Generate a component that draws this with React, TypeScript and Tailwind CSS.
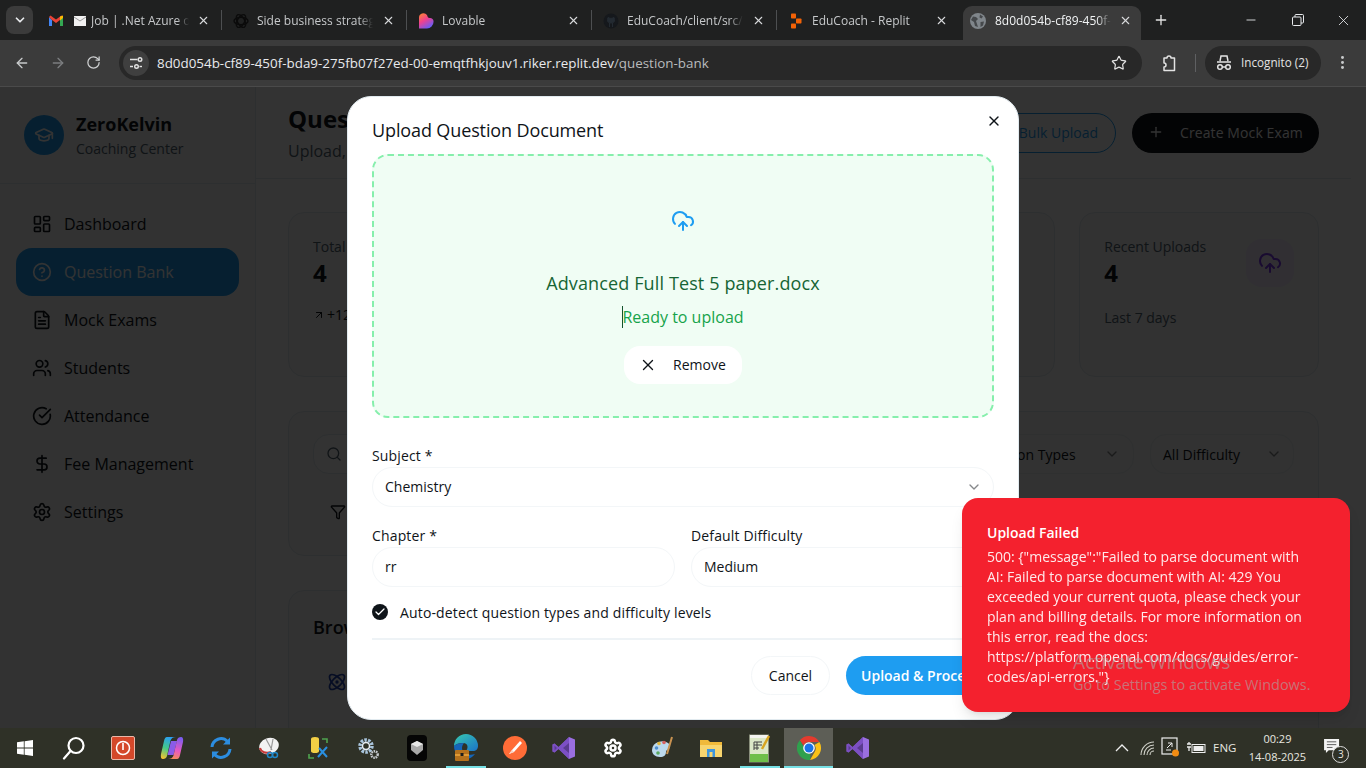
import React from "react";
import {
  LayoutDashboard, CircleHelp, FileText, Users, CircleCheckBig, DollarSign, Settings, GraduationCap,
  CloudUpload, X, ChevronDown, Check, Search, Funnel, Atom, Plus, ArrowUpRight, ArrowLeft, ArrowRight,
  RotateCw, Star, EllipsisVertical, Minus, Upload,
} from "lucide-react";

const UI = "font-['Open_Sans',sans-serif]";
const FADE = "[mask-image:linear-gradient(to_right,black_88%,transparent)]";

function Gmail() {
  return (
    <svg width="16" height="16" viewBox="0 0 16 16" className="shrink-0">
      <path d="M1 4v9h3V7z" fill="#4285f4" />
      <path d="M15 4v9h-3V7z" fill="#34a853" />
      <path d="M1 4l3 3 4 3 4-3 3-3-1.5-1.500L8 6.500 2.500 2.500z" fill="#ea4335" />
      <path d="M12 3.500l3-1v2.500l-3 2.500z" fill="#fbbc04" />
    </svg>
  );
}
function Envelope() {
  return (
    <svg width="12" height="10" viewBox="0 0 12 10" className="shrink-0">
      <rect width="12" height="10" fill="#f1f1f1" />
      <path d="M0 1l6 4 6-4" stroke="#9a9a9a" fill="none" />
    </svg>
  );
}
function Knot() {
  return (
    <svg width="16" height="16" viewBox="0 0 16 16" className="shrink-0" fill="none" stroke="#0b0b0b" strokeWidth="1.400">
      <ellipse cx="8" cy="8" rx="7" ry="3.600" />
      <ellipse cx="8" cy="8" rx="7" ry="3.600" transform="rotate(60 8 8)" />
      <ellipse cx="8" cy="8" rx="7" ry="3.600" transform="rotate(120 8 8)" />
    </svg>
  );
}
function Lovable() {
  return (
    <svg width="16" height="16" viewBox="0 0 16 16" className="shrink-0">
      <defs>
        <linearGradient id="lov" x1="0" y1="0" x2="0.6" y2="1">
          <stop offset="0" stopColor="#ff8a2a" />
          <stop offset="0.5" stopColor="#f0408f" />
          <stop offset="1" stopColor="#6a5cf6" />
        </linearGradient>
      </defs>
      <path d="M1 5a4.500 4.500 0 0 1 8-3c.6 2 1 3 2.500 3A3.500 3.500 0 0 1 15.500 9 6.500 6.500 0 0 1 9 15.500H1z" fill="url(#lov)" />
    </svg>
  );
}
function Github() {
  return (
    <svg width="16" height="16" viewBox="0 0 16 16" className="shrink-0">
      <circle cx="8" cy="8" r="7.500" fill="#15181c" />
      <path d="M4.500 6.500l.5-2 2 .8h2l2-.8.500 2c.5 2-1 3.500-3.500 3.500s-4-1.500-3.500-3.500zM6.500 10v4M9.500 10v4" fill="#232a31" stroke="#232a31" />
    </svg>
  );
}
function Replit() {
  return (
    <svg width="12" height="16" viewBox="0 0 12 16" className="shrink-0 mx-[2px]" fill="#f26207">
      <rect x="1" y="0.500" width="5" height="5" rx="0.800" />
      <rect x="6" y="5.500" width="5.500" height="5" rx="0.800" />
      <rect x="1" y="10.500" width="5" height="5" rx="0.800" />
    </svg>
  );
}
function Globe() {
  return (
    <svg width="16" height="16" viewBox="0 0 16 16" className="shrink-0">
      <circle cx="8" cy="8" r="8" fill="#80868b" />
      <path d="M3 3.500l3 .5 2 2-2 2 1 3 1 3-3-1-1-4-3-2zM10 1.500l3 2-1.500 2-2-1zM10.500 9l3.500-.5-1 4-2.500 1.500z" fill="#45484b" />
    </svg>
  );
}

function Tab({ icon, title, active, sep = true, w = "w-[185px]", pl = "pl-[11px]", closeR = "right-[12px]", tw = "w-[116px]", gap = "ml-[8px]" }: { icon: React.ReactNode; title: string; active?: boolean; sep?: boolean; w?: string; pl?: string; closeR?: string; tw?: string; gap?: string }) {
  return (
    <div className={`${w} h-[34px] relative flex items-center pb-[5px] ${pl} shrink-0 ${active ? "bg-[#3b3b3b] rounded-t-[9px]" : ""}`}>
      <div className="flex items-center shrink-0">{icon}</div>
      <span className={`${gap} ${tw} ${FADE} overflow-hidden whitespace-nowrap text-[12px] leading-[16px] ${active ? "text-[#f1f3f4]" : "text-[#c6c8ca]"}`}>
        {title}
      </span>
      <X size={13} strokeWidth={2} className={`absolute ${closeR} top-[8px] text-[#d8dadc]`} />
      {sep && <span className="absolute right-0 top-[4px] w-px h-[20px] bg-[#4d4f51]" />}
    </div>
  );
}

function ChromeBar() {
  return (
    <div className={`shrink-0 ${UI}`}>
      <div className="h-[40px] bg-[#1f2020] flex pt-[6px] relative">
        <div className="ml-[6px] w-[27px] h-[28px] rounded-[8px] bg-[#3b3b3b] flex items-center justify-center shrink-0">
          <ChevronDown size={14} strokeWidth={3} className="text-[#e8eaed]" />
        </div>
        <div className="w-[4px]" />
        <div className="w-[185px] h-[34px] relative flex items-center pb-[5px] pl-[11px] shrink-0">
          <div className="flex items-center gap-[10px]"><Gmail /><Envelope /></div>
          <span className={`ml-[5px] w-[98px] ${FADE} overflow-hidden whitespace-nowrap text-[12px] leading-[16px] text-[#c6c8ca]`}>Job | .Net Azure o</span>
          <X size={13} strokeWidth={2} className="absolute right-[12px] top-[8px] text-[#d8dadc]" />
          <span className="absolute right-0 top-[4px] w-px h-[20px] bg-[#4d4f51]" />
        </div>
        <Tab icon={<Knot />} title="Side business strategy" />
        <Tab icon={<Lovable />} title="Lovable" />
        <Tab icon={<Github />} title="EduCoach/client/src/c" />
        <Tab icon={<Replit />} title="EduCoach - Replit" w="w-[183px]" sep={false} />
        <div className="w-[3px]" />
        <Tab icon={<Globe />} title="8d0d054b-cf89-450f-" active sep={false} w="w-[178px]" pl="pl-[7px]" closeR="right-[9px]" gap="ml-[9px]" />
        <Plus size={16} strokeWidth={2} className="ml-[12px] mt-[6px] text-[#e3e3e3] shrink-0" />
        <div className="flex-1" />
        <Minus size={14} strokeWidth={1.500} className="mt-[7px] text-[#e8eaed]" />
        <svg width="12" height="12" viewBox="0 0 12 12" className="ml-[34px] mt-[8px]" fill="none" stroke="#e8eaed">
          <rect x="0.500" y="3" width="8.500" height="8.500" rx="1" />
          <path d="M3 3V1.500a1 1 0 0 1 1-1h6.500a1 1 0 0 1 1 1V8a1 1 0 0 1-1 1H9" />
        </svg>
        <X size={17} strokeWidth={1.200} className="ml-[31px] mr-[14px] mt-[6px] text-[#e8eaed]" />
      </div>
      <div className="h-[47px] bg-[#3b3b3b] border-b border-[#4a4a4a] flex items-start pt-[6px]">
        <ArrowLeft size={16} strokeWidth={2} className="ml-[14px] mt-[9px] text-[#c8cacb]" />
        <ArrowRight size={16} strokeWidth={2} className="ml-[20px] mt-[9px] text-[#7c7e80]" />
        <RotateCw size={15} strokeWidth={2} className="ml-[20px] mt-[9px] text-[#d0d2d3]" />
        <div className="ml-[18px] w-[1023px] h-[34px] rounded-full bg-[#282828] flex items-center pl-[4px] pr-[15px]">
          <div className="w-[26px] h-[26px] rounded-full bg-[#3f3f3f] flex items-center justify-center shrink-0">
            <svg width="14" height="14" viewBox="0 0 14 14" fill="none" stroke="#e3e3e3" strokeWidth="1.400">
              <path d="M1 3.500h7.500M1 10.500h3" />
              <circle cx="11" cy="3.500" r="1.800" />
              <circle cx="7.500" cy="10.500" r="1.800" />
              <path d="M10.500 10.500H13" />
            </svg>
          </div>
          <span className="ml-[8px] text-[13.400px] leading-[18px] text-[#e8eaed] whitespace-nowrap">
            8d0d054b-cf89-450f-bda9-275fb07f27ed-00-emqtfhkjouv1.riker.replit.dev<span className="text-[#b9bbbd]">/question-bank</span>
          </span>
          <div className="flex-1" />
          <Star size={16} strokeWidth={1.800} className="text-[#e3e3e3]" />
        </div>
        <svg width="16" height="18" viewBox="0 0 16 18" fill="none" stroke="#e3e3e3" strokeWidth="1.500" className="ml-[19px] mt-[8px]">
          <path d="M3 4h3a2 2 0 0 1 4 0h3.500v12.500H3V13a2 2 0 0 0 0-4z" strokeLinejoin="round" />
        </svg>
        <span className="ml-[18px] mt-[8px] w-px h-[18px] bg-[#5f6062]" />
        <div className="ml-[9px] w-[116px] h-[34px] rounded-full bg-[#282828] flex items-center pl-[10px]">
          <svg width="18" height="16" viewBox="0 0 18 16" fill="none" stroke="#e3e3e3" strokeWidth="1.500">
            <path d="M5 6l1-5h6l1 5M2 7h14" />
            <circle cx="5" cy="12" r="2.300" />
            <circle cx="13" cy="12" r="2.300" />
            <path d="M7.300 12h3.400" />
          </svg>
          <span className="ml-[8px] text-[11.700px] text-[#e3e3e3] whitespace-nowrap">Incognito (2)</span>
        </div>
        <EllipsisVertical size={17} strokeWidth={2.200} className="ml-[13px] mt-[8px] text-[#c8cacb]" />
      </div>
    </div>
  );
}

const nav = [
  { label: "Dashboard", icon: LayoutDashboard },
  { label: "Question Bank", icon: CircleHelp, active: true },
  { label: "Mock Exams", icon: FileText },
  { label: "Students", icon: Users },
  { label: "Attendance", icon: CircleCheckBig },
  { label: "Fee Management", icon: DollarSign },
  { label: "Settings", icon: Settings },
];

function Sidebar() {
  return (
    <aside className="w-[256px] shrink-0 bg-[#f7f8f8] border-r border-[#e1eaef] flex flex-col">
      <div className="h-[97px] shrink-0 border-b border-[#e1eaef] flex items-center px-6 gap-3">
        <div className="w-10 h-10 rounded-full bg-[#1e9df1] flex items-center justify-center">
          <GraduationCap size={20} className="text-white" />
        </div>
        <div>
          <div className="text-[18px] leading-[26px] font-bold text-[#0f1419]">ZeroKelvin</div>
          <div className="mt-[2px] text-[14px] leading-[20px] text-[#536471]">Coaching Center</div>
        </div>
      </div>
      <nav className="p-4">
        {nav.map((n) => (
          <div key={n.label} className={`h-12 rounded-2xl px-4 flex items-center gap-3 text-[16px] ${n.active ? "bg-[#1e9df1] text-white" : "text-[#0f1419]"}`}>
            <n.icon size={20} strokeWidth={2} />
            <span>{n.label}</span>
          </div>
        ))}
      </nav>
    </aside>
  );
}

function Stat({ title, value, sub, subClass, icon }: { title: string; value: string; sub: React.ReactNode; subClass?: string; icon?: React.ReactNode }) {
  return (
    <div className="h-[165px] rounded-2xl border border-[#e1eaef] bg-[#f7f8f8] p-6 flex justify-between">
      <div>
        <div className="text-[14px] leading-[20px] text-[#536471]">{title}</div>
        <div className="text-[24px] leading-[32px] font-bold text-[#0f1419]">{value}</div>
        <div className={`mt-[19px] text-[14px] leading-[20px] ${subClass ?? "text-[#536471]"}`}>{sub}</div>
      </div>
      {icon && <div className="mt-[2px] w-12 h-12 rounded-2xl bg-[#f3e8ff] flex items-center justify-center shrink-0">{icon}</div>}
    </div>
  );
}

function Page() {
  return (
    <main className="flex-1 min-w-0 pr-[15px] bg-white">
      <header className="h-[92px] border-b border-[#e1eaef] px-8 py-4 flex justify-between">
        <div>
          <h1 className="text-[24px] leading-[32px] font-bold text-[#0f1419]">Question Bank</h1>
          <p className="mt-1 text-[16px] leading-[24px] text-[#536471]">Upload, manage and organize your questions</p>
        </div>
        <div className="flex gap-4 mt-[10px]">
          <div className="h-10 px-[17px] pb-[2px] rounded-[20px] border border-[#1e9df1] text-[#1e9df1] text-[14px] font-medium flex items-center gap-3">
            <Upload size={16} />
            Bulk Upload
          </div>
          <div className="h-10 w-[187px] pl-[16px] pb-[2px] rounded-[20px] bg-[#0f1419] text-white text-[14px] font-medium tracking-[0.1px] flex items-center gap-[16px] whitespace-nowrap">
            <Plus size={16} />
            Create Mock Exam
          </div>
        </div>
      </header>
      <div className="px-8 pt-[33px] flex flex-col gap-[34px]">
        <div className="grid grid-cols-4 gap-6">
          <Stat
            title="Total Questions"
            value="4"
            subClass="text-[#0f1419] text-[12px]"
            sub={<span className="flex items-center gap-[2px] -mt-[3px]"><ArrowUpRight size={12} />+12 this week</span>}
          />
          <Stat title="Verified" value="4" sub="All verified" />
          <Stat title="Subjects" value="4" sub="Active subjects" />
          <Stat title="Recent Uploads" value="4" sub="Last 7 days" icon={<CloudUpload size={24} className="text-[#7c3aed]" />} />
        </div>
        <div className="h-[145px] rounded-2xl border border-[#e1eaef] bg-[#f7f8f8] p-6 flex flex-col">
          <div className="flex gap-4 items-center h-10 -mt-[2px]">
            <div className="flex-1 h-10 rounded-2xl border border-[#e1eaef] bg-white flex items-center pl-3 gap-2 text-[#536471]">
              <Search size={16} />
              <span className="text-[14px]">Search questions...</span>
            </div>
            <div className="w-[193px] h-10 flex items-center justify-between px-[13px] text-[14px] text-[#0f1419] rounded-2xl border border-[#e8edf0]">
              <span>All Question Types</span>
              <ChevronDown size={16} className="opacity-50" />
            </div>
            <div className="w-[144px] h-10 flex items-center justify-between pl-[12px] pr-[11px] text-[14px] text-[#0f1419] rounded-2xl border border-[#e8edf0]">
              <span>All Difficulty</span>
              <ChevronDown size={16} className="opacity-50" />
            </div>
          </div>
          <div className="mt-[18px] h-10 pl-[17px] flex items-center gap-2 text-[14px] text-[#0f1419]">
            <Funnel size={16} />
            <span>Filters</span>
          </div>
        </div>
        <div className="rounded-2xl border border-[#e1eaef] bg-[#f7f8f8] px-6 pt-[23px] h-[300px]">
          <h2 className="text-[18px] leading-[26px] font-semibold text-[#0f1419]">Browse by Subject</h2>
          <div className="mt-[32px] pl-[14px] flex items-center">
            <Atom size={20} className="text-[#1e40af]" />
          </div>
        </div>
      </div>
    </main>
  );
}

function Field({ label, value, chevron }: { label: string; value: string; chevron?: boolean }) {
  return (
    <div className="min-w-0">
      <div className="text-[14px] leading-[20px] font-medium tracking-[0.15px] text-[#0f1419]">{label}</div>
      <div className="mt-[1px] h-10 rounded-[20px] border border-[#f3f6f8] bg-white flex items-center justify-between pl-[12px] pr-[11px] text-[14px] text-[#0f1419]">
        <span>{value}</span>
        {chevron && <ChevronDown size={16} className="text-[#0f1419] opacity-50" />}
      </div>
    </div>
  );
}

function Modal() {
  return (
    <div className="relative w-[672px] h-[624px] shrink-0 rounded-[24px] border border-[#e1eaef] bg-white p-6 text-[#0f1419]">
      <X size={16} strokeWidth={2} className="absolute right-[16px] top-[16px]" />
      <h2 className="-mt-[1px] text-[18px] leading-[20px] font-medium tracking-[-0.12px]">Upload Question Document</h2>
      <div className="mt-[14px] h-[264px] rounded-2xl border-2 border-dashed border-[#86efac] bg-[#f0fdf4] flex flex-col items-center pt-[53px]">
        <CloudUpload size={24} strokeWidth={2} className="text-[#1e9df1]" />
        <p className="mt-[36px] text-[18px] leading-[28px] font-medium tracking-[0.13px] text-[#166534]">Advanced Full Test 5 paper.docx</p>
        <p className="mt-2 relative text-[16px] leading-[24px] text-[#16a34a]">
          <span className="absolute left-0 top-[1px] w-px h-[22px] bg-[#14532d]" />
          Ready to upload
        </p>
        <div className="mt-[17px] h-[38px] w-[118px] rounded-2xl bg-white flex items-center pl-[15px] gap-[16px] text-[14px] font-medium">
          <X size={18} strokeWidth={1.800} />
          <span>Remove</span>
        </div>
      </div>
      <div className="mt-[28px]">
        <Field label="Subject *" value="Chemistry" chevron />
      </div>
      <div className="mt-[19px] grid grid-cols-2 gap-4">
        <Field label="Chapter *" value="rr" />
        <Field label="Default Difficulty" value="Medium" chevron />
      </div>
      <div className="mt-[16px] h-5 flex items-center gap-3">
        <span className="-mt-[2px] w-4 h-4 rounded-full bg-[#0f1419] flex items-center justify-center">
          <Check size={12} strokeWidth={2.500} className="text-white" />
        </span>
        <span className="text-[14px] font-medium tracking-[0.15px]">Auto-detect question types and difficulty levels</span>
      </div>
      <div className="mt-[15px] h-[2px] bg-[#eef3f6]" />
      <div className="mt-[16px] flex justify-end gap-4">
        <div className="h-[39px] w-[79px] rounded-[20px] border border-[#f3f6f8] bg-white flex items-center justify-center text-[14px] font-medium">Cancel</div>
        <div className="h-[39px] w-[148px] rounded-[20px] bg-[#1e9df1] text-white flex items-center justify-center text-[14px] font-semibold whitespace-nowrap">Upload &amp; Process</div>
      </div>
    </div>
  );
}

function Toast() {
  return (
    <div className="absolute right-4 bottom-4 w-[388px] h-[214px] rounded-2xl bg-[#f4212e] pl-[25px] pr-[40px] pt-[25px] text-white shadow-lg">
      <div className="text-[14px] leading-[20px] font-semibold">Upload Failed</div>
      <div className="mt-[4px] text-[14px] leading-[20px] opacity-90 break-words">
        500: {"{"}"message":"Failed to parse document with AI: Failed to parse document with AI: 429 You exceeded your current quota, please check your plan and billing details. For more information on this error, read the docs: https://platform.openai.com/docs/guides/error-codes/api-errors."{"}"}
      </div>
    </div>
  );
}

function Tb({ children, hl, line }: { children: React.ReactNode; hl?: boolean; line?: "short" | "full" }) {
  return (
    <div className={`relative w-[49px] h-full flex items-center justify-center shrink-0 ${hl ? "bg-[#5d5e56]" : ""}`}>
      {children}
      {line === "short" && <span className="absolute bottom-0 left-[5px] w-[40px] h-[2px] bg-[#76e0e5]" />}
      {line === "full" && <span className="absolute bottom-0 left-0 w-full h-[2px] bg-[#76e0e5]" />}
    </div>
  );
}

function VS() {
  return (
    <svg width="24" height="24" viewBox="0 0 24 24">
      <path d="M17 1l6 2.500v17L17 23 6.500 13 2.500 16.500 0.500 15.500V8.500L2.500 7.500l4 3.500z" fill="#9a6ee0" />
      <path d="M17 7l-6 5 6 5zM2.500 9.500v5L5 12z" fill="#3a3448" />
      <path d="M17 1L6.500 11 2.500 7.500 0.500 8.500V15.500l2 1 4-3.500L17 23z" fill="#6b3fb5" opacity="0.650" />
    </svg>
  );
}

function Taskbar() {
  return (
    <div className={`h-[40px] shrink-0 bg-[#2f3127] flex items-stretch text-white ${UI}`}>
      <Tb>
        <svg width="16" height="16" viewBox="0 0 16 16" fill="#fff">
          <path d="M0 2.300l6.800-1v6.300H0zM7.600 1.200L16 0v7.600H7.600zM0 8.400h6.800v6.300L0 13.700zM7.600 8.400H16V16l-8.400-1.200z" />
        </svg>
      </Tb>
      <Tb>
        <svg width="24" height="24" viewBox="0 0 24 24" fill="none" stroke="#fff" strokeWidth="2.200">
          <circle cx="14" cy="9.500" r="7.500" />
          <path d="M8.500 15L2 22.500" strokeLinecap="round" />
        </svg>
      </Tb>
      <Tb>
        <svg width="24" height="24" viewBox="0 0 24 24">
          <rect x="0.500" y="0.500" width="23" height="23" rx="1.500" fill="#d4482a" stroke="#e9b7a8" />
          <circle cx="12" cy="12" r="6.500" fill="none" stroke="#fff" strokeWidth="1.500" />
          <rect x="11.200" y="7" width="1.600" height="7" fill="#fff" />
        </svg>
      </Tb>
      <Tb>
        <svg width="24" height="24" viewBox="0 0 24 24">
          <defs>
            <linearGradient id="cp1" x1="0.500" y1="0" x2="0.200" y2="1">
              <stop offset="0" stopColor="#2b9ff0" />
              <stop offset="0.500" stopColor="#43c98a" />
              <stop offset="1" stopColor="#f5c12e" />
            </linearGradient>
            <linearGradient id="cp2" x1="0.600" y1="0" x2="0.400" y2="1">
              <stop offset="0" stopColor="#7a5cf0" />
              <stop offset="0.600" stopColor="#e85ac0" />
              <stop offset="1" stopColor="#f58a5a" />
            </linearGradient>
          </defs>
          <path d="M11 5h6l-3.500 14h-6z" fill="#8a5ce8" />
          <path d="M7 1h9c-3 0-4.500 1-5.500 3.500L7 20c-.5 2-2 3-4 3-2 0-2.500-2-2-5L4 5c.5-2.500 1.500-4 3-4z" fill="url(#cp1)" />
          <path d="M17 23H8c3 0 4.500-1 5.500-3.500L17 4c.5-2 2-3 4-3 2 0 2.500 2 2 5l-3 13c-.5 2.500-1.500 4-3 4z" fill="url(#cp2)" />
        </svg>
      </Tb>
      <Tb>
        <svg width="24" height="24" viewBox="0 0 24 24" fill="none" stroke="#2c8de0" strokeWidth="3">
          <path d="M3 11a9 9 0 0 1 15.500-5.500" />
          <path d="M21 13a9 9 0 0 1-15.500 5.500" />
          <path d="M21 1.500v7h-7zM3 22.500v-7h7z" fill="#2c8de0" stroke="none" />
        </svg>
      </Tb>
      <Tb>
        <svg width="24" height="24" viewBox="0 0 24 24">
          <ellipse cx="11" cy="10" rx="10" ry="8" fill="#f2f2f2" transform="rotate(-20 11 10)" />
          <path d="M2 12c1 4 6 6 11 4" stroke="#c83a3a" strokeWidth="2" fill="none" />
          <path d="M8 3l6 11M15 3l-2 11" stroke="#999" strokeWidth="1.200" />
          <circle cx="12" cy="19" r="2.500" fill="none" stroke="#1f86c8" strokeWidth="1.500" />
          <circle cx="17" cy="19" r="2.500" fill="none" stroke="#1f86c8" strokeWidth="1.500" />
        </svg>
      </Tb>
      <Tb>
        <svg width="24" height="24" viewBox="0 0 24 24" fill="none">
          <path d="M4 3a4 2 0 0 1 8 0v12a4 2 0 0 1-8 0z" fill="#f2cf45" />
          <path d="M15 3h5v4M2 18v4h5" stroke="#4fa34f" strokeWidth="1.600" />
          <path d="M11 21l9-10M20 21l-8-9" stroke="#2a8fe0" strokeWidth="2" />
        </svg>
      </Tb>
      <Tb>
        <svg width="24" height="24" viewBox="0 0 24 24" fill="none">
          <circle cx="10" cy="10" r="6" stroke="#a9c4dc" strokeWidth="3.500" strokeDasharray="2.500 1.200" />
          <circle cx="10" cy="10" r="3.500" stroke="#e8eef4" strokeWidth="1.500" />
          <circle cx="18.500" cy="18.500" r="3.200" stroke="#c8ccd0" strokeWidth="2.400" strokeDasharray="1.500 0.800" />
        </svg>
      </Tb>
      <Tb>
        <svg width="20" height="26" viewBox="0 0 20 26">
          <rect width="20" height="26" rx="4" fill="#050505" />
          <path d="M10 6l6 3v6l-6 5-6-5V9z" fill="#a8a8a8" />
          <path d="M4 9l6 3 6-3-6-3z" fill="#e8e8e8" />
        </svg>
      </Tb>
      <Tb line="short">
        <svg width="26" height="28" viewBox="0 0 26 28">
          <defs>
            <linearGradient id="edg" x1="0" y1="0" x2="1" y2="1">
              <stop offset="0" stopColor="#37c9b0" />
              <stop offset="1" stopColor="#1b73c9" />
            </linearGradient>
          </defs>
          <path d="M1 12a12 12 0 0 1 24 0c0 3-2 5-5 5H13c2-2 3-8-3-8-4 0-7 1-9 3z" fill="url(#edg)" />
          <path d="M1 12c0 7 5 13 12 13 3 0 7-2 9-5-6 2-13 0-13-6 0-2 1-4 2-5-5 0-8 1-10 3z" fill="#1565b8" />
          <rect x="2" y="16" width="14" height="11" rx="1" fill="#b5711c" />
          <rect x="2" y="20" width="14" height="2" fill="#e09a35" />
          <rect x="7.500" y="19" width="3" height="3" fill="#1d1d1d" />
        </svg>
      </Tb>
      <Tb>
        <svg width="24" height="24" viewBox="0 0 24 24">
          <ellipse cx="12" cy="12" rx="12" ry="12" fill="#ff6c37" />
          <path d="M6 18l5-2 8-9-2-2-8 9z" fill="#fff" />
          <path d="M6 18l3-4 2 2z" fill="#f8d2c2" />
        </svg>
      </Tb>
      <Tb><VS /></Tb>
      <Tb>
        <Settings size={20} strokeWidth={3} className="text-white" />
      </Tb>
      <Tb>
        <svg width="24" height="24" viewBox="0 0 24 24">
          <path d="M2 14a10 9 0 0 1 18-5c1 5-4 4-4 7 0 3-2 5-6 5-5 0-8-3-8-7z" fill="#bcd8ec" />
          <circle cx="6.500" cy="12" r="1.800" fill="#4f8fd0" />
          <circle cx="9" cy="7.500" r="1.800" fill="#e0b53b" />
          <circle cx="14" cy="6.500" r="1.800" fill="#d65f5f" />
          <circle cx="8" cy="17" r="1.800" fill="#5aa860" />
          <path d="M22 1l-5 17" stroke="#c89250" strokeWidth="2" />
        </svg>
      </Tb>
      <Tb>
        <svg width="22" height="22" viewBox="0 0 22 22">
          <path d="M0 3h8l2 2h12v14H0z" fill="#f0b93a" />
          <rect x="0" y="8" width="22" height="12" fill="#f7d46e" />
          <rect x="7" y="12" width="8" height="8" fill="#3e95dc" />
          <rect x="9.500" y="15" width="3" height="5" fill="#f7d46e" />
        </svg>
      </Tb>
      <Tb line="short">
        <svg width="22" height="30" viewBox="0 0 22 30">
          <rect x="0.500" y="2" width="19" height="27" fill="#dce8c8" stroke="#8a8f7c" />
          <rect x="1" y="2" width="18" height="3" fill="#f4f4f0" />
          <path d="M5 9h8M5 12h8M5 15h5M5 9v8M8 9v8" stroke="#444" strokeWidth="1" />
          <rect x="1" y="21" width="18" height="8" fill="#6fbf4a" />
          <path d="M20 3l-7 13" stroke="#d8a520" strokeWidth="2.500" />
        </svg>
      </Tb>
      <Tb hl line="full">
        <svg width="24" height="24" viewBox="0 0 24 24">
          <path d="M12 0a12 12 0 0 1 10.400 6H12a6 6 0 0 0-5.500 3.500L2.800 4.300A12 12 0 0 1 12 0z" fill="#e33b2e" />
          <path d="M22.400 6A12 12 0 0 1 13 24l4.600-8a6 6 0 0 0-.2-7z" fill="#fbc116" />
          <path d="M13 24A12 12 0 0 1 2.800 4.300L7 11.500a6 6 0 0 0 6.500 6.300z" fill="#2fa04d" />
          <circle cx="12" cy="12" r="5.800" fill="#fff" />
          <circle cx="12" cy="12" r="4.500" fill="#1a73e8" />
        </svg>
      </Tb>
      <Tb><VS /></Tb>
      <div className="flex-1" />
      <div className="flex items-center text-[#e8e8e0] w-[252px] shrink-0">
        <svg width="14" height="8" viewBox="0 0 14 8" fill="none" stroke="#eee" strokeWidth="1.300" className="ml-[1px]">
          <path d="M1 7l6-6 6 6" />
        </svg>
        <svg width="15" height="15" viewBox="0 0 15 15" fill="none" stroke="#cfd0c8" strokeWidth="1.100" className="ml-[11px]">
          <path d="M1 14a13 13 0 0 1 13-13M4 14a10 10 0 0 1 10-10M7 14a7 7 0 0 1 7-7M10 14a4 4 0 0 1 4-4" />
        </svg>
        <svg width="20" height="22" viewBox="0 0 20 22" fill="none" className="ml-[6px]">
          <rect x="1" y="1" width="15" height="16" stroke="#eee" strokeWidth="1.200" />
          <path d="M6 11l5-5M7 6h4v4M5 13h5" stroke="#eee" strokeWidth="1" />
          <circle cx="14.500" cy="16" r="3.500" fill="#f28c13" />
        </svg>
        <svg width="20" height="14" viewBox="0 0 20 14" fill="none" stroke="#eee" className="ml-[5px]">
          <rect x="6" y="3.500" width="13" height="8" />
          <rect x="8" y="5.500" width="9" height="4" fill="#eee" />
          <path d="M1 3h4M1 6h4M3 1v2M3 6v4" strokeWidth="1.300" />
        </svg>
        <span className="ml-[7px] text-[11.500px] text-[#e8e8e0] whitespace-nowrap">ENG</span>
        <div className="ml-[6px] w-[70px] text-center text-[11px] leading-[18px] text-[#e8e8e0] whitespace-nowrap">
          <div>00:29</div>
          <div>14-08-2025</div>
        </div>
        <div className="relative ml-[12px] -mt-[3px]">
          <svg width="17" height="15" viewBox="0 0 18 16" className="block">
            <path d="M0 0h16v12H5l-3 3v-3H0z" fill="#f4f4f4" />
            <path d="M3 3h10M3 6h10M3 9h6" stroke="#555" />
          </svg>
          <span className="absolute left-[8px] top-[7px] w-[17px] h-[17px] rounded-full bg-[#2f3127] border border-[#dcdcdc] text-[10px] leading-[15px] text-center">3</span>
        </div>
      </div>
    </div>
  );
}

export default function App() {
  return (
    <div className={`w-[1366px] h-[768px] overflow-hidden flex flex-col bg-white ${UI}`}>
      <ChromeBar />
      <div className="relative flex-1 min-h-0 flex overflow-hidden">
        <Sidebar />
        <Page />
        <div className="absolute inset-0 bg-black/80 flex items-center justify-center">
          <Modal />
        </div>
        <Toast />
        <div className="absolute left-[1073px] top-[562px] pointer-events-none text-[rgba(170,170,170,0.6)] whitespace-nowrap">
          <div className="text-[19.200px] leading-[26px]">Activate Windows</div>
          <div className="text-[14.500px] leading-[20px]">Go to Settings to activate Windows.</div>
        </div>
      </div>
      <Taskbar />
    </div>
  );
}
